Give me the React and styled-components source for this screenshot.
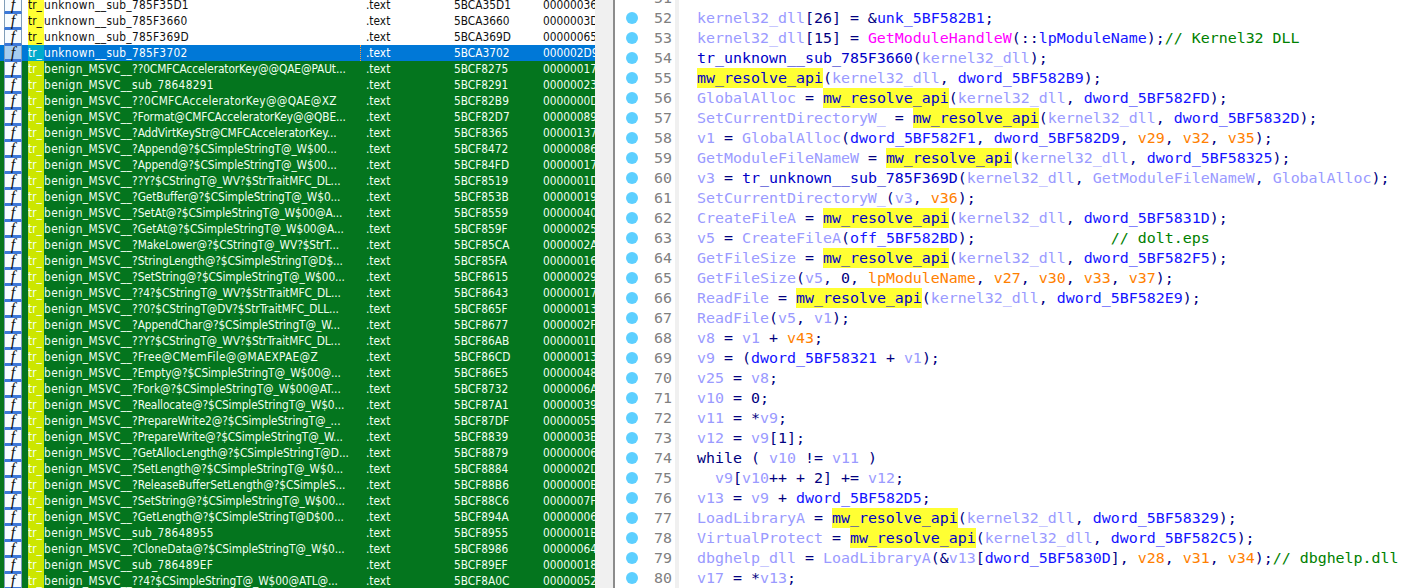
import React from "react";
import styled, { createGlobalStyle } from "styled-components";

const GlobalStyle = createGlobalStyle`
	html, body {
		margin: 0;
		padding: 0;
		background: #fff;
		overflow: hidden;
	}
`;

const Window = styled.div`
	display: flex;
	width: 1412px;
	height: 588px;
	overflow: hidden;
`;

const FunctionList = styled.div`
	width: 595px;
	flex: none;
	height: 588px;
	overflow: hidden;
	font-family: "DejaVu Sans", sans-serif;
	font-stretch: condensed;
	font-size: 11.8px;
`;

const RowStack = styled.div`
	margin-top: -3px;
`;

const rowBackground = { plain: "#fff", benign: "#04751e", selected: "#0078d7" };
const rowColor = { plain: "#101010", benign: "#f0fff0", selected: "#fff" };
const tagBackground = { plain: "#ffff33", benign: "#cce600", selected: "#00aacc" };

const Row = styled.div`
	display: flex;
	height: 16px;
	line-height: 16px;
	white-space: nowrap;
	overflow: hidden;
	background: ${p => rowBackground[p.$kind]};
	color: ${p => rowColor[p.$kind]};
`;

const IconBox = styled.span`
	flex: none;
	box-sizing: border-box;
	width: 18px;
	height: 16px;
	margin: 0 6px 0 4px;
	border-left: 1px solid #7f9db9;
	border-right: 1px solid #7f9db9;
	border-top: 1px solid #3c78d8;
	border-bottom: 2px solid #3c78d8;
	background: ${p => (p.$selected ? "#a6cdf0" : "#f6fbff")};
	color: #111;
	font: italic 16px/13px "Liberation Serif", serif;
	text-align: center;
`;

const NameCell = styled.span`
	flex: none;
	width: 332px;
	overflow: hidden;
`;

const Tag = styled.span`
	display: inline-block;
	width: 16px;
	background: ${p => tagBackground[p.$kind]};
`;

const NamePrefix = styled.span`
	letter-spacing: 0.4px;
`;

// names cut by the list keep tighter spacing so the dots stay inside the column
const NameRest = styled.span`
	letter-spacing: ${p => (p.$cut ? "-0.1px" : "0.28px")};
`;

const Divider = styled.span`
	flex: none;
	width: 0;
	height: 16px;
	border-left: 1px dotted ${p => (p.$selected ? "#ff9a3c" : "transparent")};
`;

const SegmentCell = styled.span`
	flex: none;
	width: 93px;
	padding-left: 5px;
	box-sizing: border-box;
`;

const AddressCell = styled.span`
	flex: none;
	width: 89px;
`;

const LengthCell = styled.span`
	flex: none;
	width: 52px;
	overflow: hidden;
`;

const Splitter = styled.div`
	flex: none;
	width: 18px;
	background: #f0f0f0;
	border-right: 2px solid #8c8c8c;
`;

const CodePane = styled.div`
	flex: 1;
	min-width: 0;
	height: 588px;
	overflow: hidden;
	background: #fff;
	font-family: "DejaVu Sans Mono", monospace;
	font-size: 14.95px;
`;

const CodeStack = styled.div`
	margin-top: -12px;
`;

const CodeLine = styled.div`
	display: flex;
	height: 20px;
	line-height: 20px;
	white-space: pre;
`;

const Gutter = styled.div`
	flex: none;
	display: flex;
	align-items: center;
	width: 64px;
	box-sizing: border-box;
	padding-left: 11px;
	border-right: 4px solid #f0f0f0;
`;

const Dot = styled.span`
	flex: none;
	width: 12px;
	height: 12px;
	border-radius: 50%;
	background: ${p => (p.$hidden ? "transparent" : "#5ccfff")};
`;

const LineNumber = styled.span`
	flex: 1;
	text-align: right;
	color: #808080;
	padding-right: 3px;
`;

const CodeText = styled.div`
	padding-left: 18px;
	color: #000080;
`;

const tokenColor = {
	variable: "#9a9aff",
	global: "#1414ff",
	call: "#0000c8",
	import: "#ff00ff",
	stack: "#ff8000",
	comment: "#008000",
};

const Token = styled.span`
	color: ${p => tokenColor[p.$type]};
`;

const ApiMark = styled.span`
	display: inline-block;
	height: 20px;
	background: #ffff33;
	color: #0000c8;
`;

const benignRows = [
	["??0CMFCAcceleratorKey@@QAE@PAUt...", "5BCF8275", "00000017"],
	["sub_78648291", "5BCF8291", "00000023"],
	["??0CMFCAcceleratorKey@@QAE@XZ", "5BCF82B9", "0000000D"],
	["?Format@CMFCAcceleratorKey@@QBE...", "5BCF82D7", "00000089"],
	["?AddVirtKeyStr@CMFCAcceleratorKey...", "5BCF8365", "00000137"],
	["?Append@?$CSimpleStringT@_W$00...", "5BCF8472", "00000086"],
	["?Append@?$CSimpleStringT@_W$00...", "5BCF84FD", "00000017"],
	["??Y?$CStringT@_WV?$StrTraitMFC_DL...", "5BCF8519", "0000001D"],
	["?GetBuffer@?$CSimpleStringT@_W$0...", "5BCF853B", "00000019"],
	["?SetAt@?$CSimpleStringT@_W$00@A...", "5BCF8559", "00000040"],
	["?GetAt@?$CSimpleStringT@_W$00@A...", "5BCF859F", "00000025"],
	["?MakeLower@?$CStringT@_WV?$StrT...", "5BCF85CA", "0000002A"],
	["?StringLength@?$CSimpleStringT@D$...", "5BCF85FA", "00000016"],
	["?SetString@?$CSimpleStringT@_W$00...", "5BCF8615", "00000029"],
	["??4?$CStringT@_WV?$StrTraitMFC_DL...", "5BCF8643", "00000017"],
	["??0?$CStringT@DV?$StrTraitMFC_DLL...", "5BCF865F", "00000013"],
	["?AppendChar@?$CSimpleStringT@_W...", "5BCF8677", "0000002F"],
	["??Y?$CStringT@_WV?$StrTraitMFC_DL...", "5BCF86AB", "0000001D"],
	["?Free@CMemFile@@MAEXPAE@Z", "5BCF86CD", "00000013"],
	["?Empty@?$CSimpleStringT@_W$00@...", "5BCF86E5", "00000048"],
	["?Fork@?$CSimpleStringT@_W$00@AT...", "5BCF8732", "0000006A"],
	["?Reallocate@?$CSimpleStringT@_W$0...", "5BCF87A1", "00000039"],
	["?PrepareWrite2@?$CSimpleStringT@_...", "5BCF87DF", "00000055"],
	["?PrepareWrite@?$CSimpleStringT@_W...", "5BCF8839", "0000003B"],
	["?GetAllocLength@?$CSimpleStringT@D...", "5BCF8879", "00000006"],
	["?SetLength@?$CSimpleStringT@_W$0...", "5BCF8884", "0000002D"],
	["?ReleaseBufferSetLength@?$CSimpleS...", "5BCF88B6", "0000000B"],
	["?SetString@?$CSimpleStringT@_W$00...", "5BCF88C6", "0000007F"],
	["?GetLength@?$CSimpleStringT@D$00...", "5BCF894A", "00000006"],
	["sub_78648955", "5BCF8955", "0000001B"],
	["?CloneData@?$CSimpleStringT@_W$0...", "5BCF8986", "00000064"],
	["sub_786489EF", "5BCF89EF", "00000018"],
	["??4?$CSimpleStringT@_W$00@ATL@...", "5BCF8A0C", "00000052"],
];

const rows = [
	{ kind: "plain", prefix: "unknown__", name: "sub_785F35D1", address: "5BCA35D1", length: "00000036" },
	{ kind: "plain", prefix: "unknown__", name: "sub_785F3660", address: "5BCA3660", length: "0000003D" },
	{ kind: "plain", prefix: "unknown__", name: "sub_785F369D", address: "5BCA369D", length: "00000065" },
	{ kind: "selected", prefix: "unknown__", name: "sub_785F3702", address: "5BCA3702", length: "000002D9" },
	...benignRows.map(([name, address, length]) => ({
		kind: "benign",
		prefix: "benign_MSVC__",
		name,
		address,
		length,
	})),
];

const codeLines = [
	[51, ""],
	[52, "kernel32_dll[26] = &unk_5BF582B1;"],
	[53, "kernel32_dll[15] = GetModuleHandleW(::lpModuleName);// Kernel32 DLL"],
	[54, "tr_unknown__sub_785F3660(kernel32_dll);"],
	[55, "mw_resolve_api(kernel32_dll, dword_5BF582B9);"],
	[56, "GlobalAlloc = mw_resolve_api(kernel32_dll, dword_5BF582FD);"],
	[57, "SetCurrentDirectoryW_ = mw_resolve_api(kernel32_dll, dword_5BF5832D);"],
	[58, "v1 = GlobalAlloc(dword_5BF582F1, dword_5BF582D9, v29, v32, v35);"],
	[59, "GetModuleFileNameW = mw_resolve_api(kernel32_dll, dword_5BF58325);"],
	[60, "v3 = tr_unknown__sub_785F369D(kernel32_dll, GetModuleFileNameW, GlobalAlloc);"],
	[61, "SetCurrentDirectoryW_(v3, v36);"],
	[62, "CreateFileA = mw_resolve_api(kernel32_dll, dword_5BF5831D);"],
	[63, "v5 = CreateFileA(off_5BF582BD);               // dolt.eps"],
	[64, "GetFileSize = mw_resolve_api(kernel32_dll, dword_5BF582F5);"],
	[65, "GetFileSize(v5, 0, lpModuleName, v27, v30, v33, v37);"],
	[66, "ReadFile = mw_resolve_api(kernel32_dll, dword_5BF582E9);"],
	[67, "ReadFile(v5, v1);"],
	[68, "v8 = v1 + v43;"],
	[69, "v9 = (dword_5BF58321 + v1);"],
	[70, "v25 = v8;"],
	[71, "v10 = 0;"],
	[72, "v11 = *v9;"],
	[73, "v12 = v9[1];"],
	[74, "while ( v10 != v11 )"],
	[75, "  v9[v10++ + 2] += v12;"],
	[76, "v13 = v9 + dword_5BF582D5;"],
	[77, "LoadLibraryA = mw_resolve_api(kernel32_dll, dword_5BF58329);"],
	[78, "VirtualProtect = mw_resolve_api(kernel32_dll, dword_5BF582C5);"],
	[79, "dbghelp_dll = LoadLibraryA(&v13[dword_5BF5830D], v28, v31, v34);// dbghelp.dll"],
	[80, "v17 = *v13;"],
];

const STACK_VARS = /^(v27|v28|v29|v30|v31|v32|v33|v34|v35|v36|v37|v43|lpModuleName)$/;

const classify = word => {
	if (STACK_VARS.test(word)) return "stack";
	if (/^(dword_|unk_|off_)/.test(word)) return "global";
	if (word.startsWith("tr_unknown")) return "call";
	if (word === "GetModuleHandleW") return "import";
	if (word === "while") return null;
	if (/^[A-Za-z]/.test(word)) return "variable";
	return null;
};

const renderCode = text => {
	const commentAt = text.indexOf("//");
	const code = commentAt === -1 ? text : text.slice(0, commentAt);
	const parts = code.split(/(::lpModuleName|[A-Za-z_][A-Za-z0-9_]*)/);
	return (
		<>
			{parts.map((part, i) => {
				if (part === "mw_resolve_api") return <ApiMark key={i}>{part}</ApiMark>;
				if (part === "::lpModuleName") {
					return (
						<React.Fragment key={i}>
							::<Token $type="global">lpModuleName</Token>
						</React.Fragment>
					);
				}
				const type = classify(part);
				return type ? (
					<Token key={i} $type={type}>
						{part}
					</Token>
				) : (
					part
				);
			})}
			{commentAt !== -1 && <Token $type="comment">{text.slice(commentAt)}</Token>}
		</>
	);
};

const App = () => (
	<Window>
		<GlobalStyle />
		<FunctionList>
			<RowStack>
				{rows.map(row => (
					<Row key={row.address} $kind={row.kind}>
						<IconBox $selected={row.kind === "selected"}>f</IconBox>
						<NameCell>
							<Tag $kind={row.kind}>tr_</Tag>
							<NamePrefix>{row.prefix}</NamePrefix>
							<NameRest $cut={row.name.endsWith("...")}>{row.name}</NameRest>
						</NameCell>
						<Divider $selected={row.kind === "selected"} />
						<SegmentCell>.text</SegmentCell>
						<AddressCell>{row.address}</AddressCell>
						<LengthCell>{row.length}</LengthCell>
					</Row>
				))}
			</RowStack>
		</FunctionList>
		<Splitter />
		<CodePane>
			<CodeStack>
				{codeLines.map(([number, text]) => (
					<CodeLine key={number}>
						<Gutter>
							<Dot $hidden={number === 51} />
							<LineNumber>{number}</LineNumber>
						</Gutter>
						<CodeText>{renderCode(text)}</CodeText>
					</CodeLine>
				))}
			</CodeStack>
		</CodePane>
	</Window>
);

export default App;
